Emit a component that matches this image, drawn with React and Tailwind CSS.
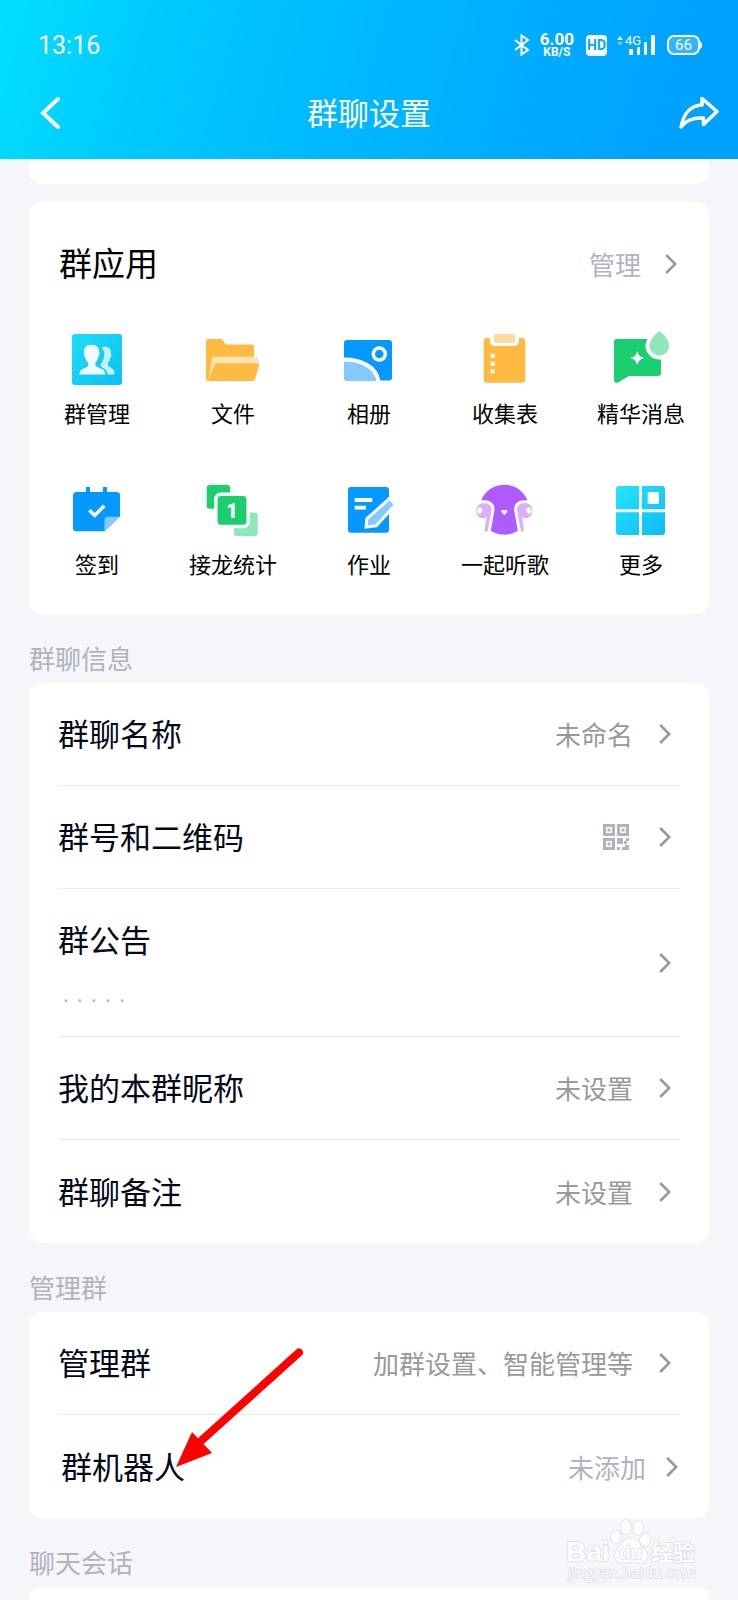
const Chevron = () => (
  <svg className="shrink-0 text-[#999999]" width="12" height="20" viewBox="0 0 12 20" fill="none" stroke="currentColor" strokeWidth="2.6">
    <path d="M1.2 1 L10.2 10 L1.2 19" />
  </svg>
);

const QrIcon = () => (
  <svg className="mr-1" width="26" height="26" viewBox="0 0 26 26" fill="#b0b3bf">
    <path fillRule="evenodd" d="M0 0h12v12H0z M3 3v6h6V3z M14 0h12v12H14z M17 3v6h6V3z M0 14h12v12H0z M3 17v6h6v-6z" />
    <path d="M4.5 4.5h3v3h-3z M18.5 4.5h3v3h-3z M4.5 18.5h3v3h-3z M14 14h6v6h-6z M14 23h3v3h-3z M23 14h3v3h-2v3h-3v-3h2z M19 23h3v-2h4v5h-7z" />
  </svg>
);

const icons = {
  manage: (
    <>
      <defs>
        <linearGradient id="manageBg" x1="0" y1="0" x2="1" y2="1">
          <stop offset="0" stopColor="#1fdcf6" />
          <stop offset="1" stopColor="#0cc0f2" />
        </linearGradient>
      </defs>
      <rect x="5" y="5" width="50" height="51" rx="3" fill="url(#manageBg)" />
      <path
        fill="#c4f2fc"
        d="M34.5 18.8c1.3-.9 2.6-1.2 4-1 4 .3 5.7 3 5.6 6.6l.4 1.5-1 2.5c-.4 2.3-1.4 3.7-2.5 5.2-.3 1-.2 2.6.4 3.4 1.6 1.6 5.3 1.9 5.9 6.3v2.2h-6.8c-.4-6.6-5-5.7-6.7-8.6-.6-1.1-.1-2.1.7-3 1.6-1.8 2.2-3.9 2.4-6.2.9-2.9.5-6.4-2.4-8.9z"
      />
      <path
        fill="#eefbff"
        d="M24.5 15.8c5.8 0 8 3.5 7.7 8.2.8 1.3 0 3.3-1 4.2-.5 2.6-1.5 4-2.7 5.6-.2 1-.1 2.5.2 3.3 3 2.7 9.2 2 9.7 8.3H12.3c.6-6.3 6.6-5.7 8.6-8.3.4-.8.4-2.3.2-3.3-1.3-1.6-2.5-3-3-5.6-1-.9-1.8-2.9-.9-4.2-.4-4.7 1.4-8.2 7.3-8.2z"
      />
    </>
  ),
  file: (
    <>
      <path d="M5 10h12.5q1.3 0 2 1l3.3 4.5H49q2 0 2 2V40L8 52H5q-2 0-2-2V12q0-2 2-2z" fill="#ffba42" />
      <path d="M10.5 27.7H55V36L12 50l-7 1.5 4.3-22.5q.2-1.3 1.2-1.3z" fill="#ffe3b5" />
      <path d="M14 34.3H55.5q1.2 0 .9 1.3L52 50.6q-.5 1.4-2 1.4H6q-1.5 0-1-1.3L12 35.5q.6-1.2 2-1.2z" fill="#ffba42" />
    </>
  ),
  album: (
    <>
      <rect x="5" y="11" width="48" height="40.5" rx="3" fill="#0598ff" />
      <path d="M5 30.5C24 30.5 37.5 39 40 51.5H8q-3 0-3-3z" fill="#85c9ff" />
      <path d="M4.5 30.5C23 30.5 37 38 39.5 52" fill="none" stroke="#fff" strokeWidth="4" />
      <circle cx="40.3" cy="25" r="6" fill="none" stroke="#fff" strokeWidth="3.5" />
    </>
  ),
  form: (
    <>
      <rect x="8.7" y="9" width="41.6" height="44.7" rx="3" fill="#ffba42" />
      <path d="M15 8H44V12q0 5-5 5H20q-5 0-5-5z" fill="#fff" />
      <rect x="18.7" y="5" width="21.5" height="9" rx="2" fill="#ffdaa1" />
      <path d="M15.7 24.7h4v4h-4z M15.7 32.8h4v4h-4z M15.7 40.2h4v4h-4z" fill="#fff" />
    </>
  ),
  essence: (
    <>
      <path d="M6 10H47q3 0 3 3V44q0 3-3 3H18L7 53.5q-3.5 1.5-4-2V13q0-3 3-3z" fill="#1bcf71" />
      <path
        d="M48.3 2Q39 10 38.5 16.5a10 10 0 0 0 20 0Q58 10 48.3 2z"
        fill="#fff"
        stroke="#fff"
        strokeWidth="8"
      />
      <path d="M48.3 2Q38.5 10 38.3 16.5a10 10 0 0 0 20 0Q58 10 48.3 2z" fill="#8de7b8" />
      <path d="M26.3 22Q27.5 28 33.5 29Q27.5 30 26.3 36Q25 30 19 29Q25 28 26.3 22z" fill="#fff" />
    </>
  ),
  sign: (
    <>
      <path d="M19 7h4v7h-4z M36 7h4v7h-4z" fill="#0598ff" />
      <path d="M9.5 12H49.5q3.5 0 3.5 3.5V36.5L37.5 51.3H9.5Q6 51.3 6 48V15.5Q6 12 9.5 12z" fill="#0598ff" />
      <path d="M53 36.7L37.5 51.3V40.2q0-3.5 3.5-3.5z" fill="#85c9ff" />
      <path d="M22.3 30.2l5.5 5.2 9.5-9.7" fill="none" stroke="#fff" strokeWidth="3.5" />
    </>
  ),
  chain: (
    <>
      <rect x="31" y="32.5" width="23.7" height="23.5" rx="3" fill="#8de7b8" />
      <rect x="3.7" y="5" width="23.5" height="23.7" rx="3" fill="#1bcf71" />
      <rect x="12.8" y="14.2" width="32.4" height="32.4" rx="5" fill="#1bcf71" stroke="#fff" strokeWidth="3.5" />
      <text x="29" y="37.5" textAnchor="middle" fontFamily="Roboto, sans-serif" fontWeight="900" fontSize="20" fill="#fff">
        1
      </text>
    </>
  ),
  homework: (
    <>
      <rect x="9" y="7" width="41" height="45.8" rx="3" fill="#0598ff" />
      <path d="M15.7 18h17.6v4H15.7z M15.7 25.8H27v3.7H15.7z" fill="#fff" />
      <path
        d="M50.5 20.5L54.5 24.5L36.5 44.5L28.8 45.3L29.3 39.5z"
        fill="#85c9ff"
        stroke="#fff"
        strokeWidth="6"
        paintOrder="stroke"
      />
    </>
  ),
  music: (
    <>
      <circle cx="29.3" cy="29.7" r="25" fill="#ae5cff" />
      {["", "matrix(-1 0 0 1 58.6 0)"].map((t) => (
        <g key={t} transform={t || undefined}>
          <path d="M0 24H8V38L11 52V58H0z" fill="#fff" />
          <path
            d="M7.5 23.3C13 22.5 17.5 25 16.2 31.5L12.8 50.5Q12.6 51.5 11.6 51.5H9.5L11.5 36.5Q9.500 38.6 6.5 38.3C-1 36-.5 24.5 7.5 23.3z"
            fill="#d9aefb"
            stroke="#fff"
            strokeWidth="6"
            paintOrder="stroke"
          />
          <ellipse cx="4.6" cy="30.5" rx="2.5" ry="3.3" fill="#fff" transform="rotate(12 4.6 30.5)" />
        </g>
      ))}
      <path d="M29.3 35.2l-2.8-2.9q-.9-2.2 1.2-2.5 1.1 0 1.6 1 .5-1 1.6-1 2.1.3 1.2 2.5z" fill="#fff" />
    </>
  ),
  more: (
    <>
      <defs>
        <linearGradient id="moreBg" gradientUnits="userSpaceOnUse" x1="8" y1="6" x2="54" y2="55">
          <stop offset="0" stopColor="#24e4fb" />
          <stop offset="1" stopColor="#0cbcf3" />
        </linearGradient>
      </defs>
      <path
        fill="url(#moreBg)"
        fillRule="evenodd"
        d="M8 6H28V29.3H5V9q0-3 3-3z M31 6H51q3 0 3 3V29.3H31z M36.7 12V24H48V12z M5 32.3H28V55H8q-3 0-3-3z M31 32.3H54V52q0 3-3 3H31z"
      />
    </>
  ),
};

const apps = [
  { icon: "manage", label: "群管理" },
  { icon: "file", label: "文件" },
  { icon: "album", label: "相册" },
  { icon: "form", label: "收集表" },
  { icon: "essence", label: "精华消息" },
  { icon: "sign", label: "签到" },
  { icon: "chain", label: "接龙统计" },
  { icon: "homework", label: "作业" },
  { icon: "music", label: "一起听歌" },
  { icon: "more", label: "更多" },
];

const infoRows = [
  { label: "群聊名称", value: "未命名" },
  { label: "群号和二维码", value: <QrIcon /> },
  { label: "群公告", note: "· · · · ·" },
  { label: "我的本群昵称", value: "未设置" },
  { label: "群聊备注", value: "未设置" },
];

const manageRows = [
  { label: "管理群", value: "加群设置、智能管理等" },
  { label: "群机器人", value: "未添加", light: true },
];

function Row({ label, value, note, light }) {
  return (
    <li className={`mx-[29px] border-b border-[#ebebed] last:border-b-0 ${note ? "h-[148px]" : "h-[103px]"}`}>
      <button
        type="button"
        className={`flex h-full w-full items-center justify-between text-left ${light ? "pl-[3px] pr-0.5" : "pr-[9px]"}`}
      >
        <span className={`flex flex-col ${note ? "pt-2" : "pb-0.5"}`}>
          <span className="text-[31px] leading-10 text-[#03081a]">{label}</span>
          {note && (
            <span className="mt-6 pl-1 font-['Liberation_Sans',sans-serif] text-[23px] leading-8 text-[#b3b3b3]">{note}</span>
          )}
        </span>
        <span className={`flex items-center text-[26px] leading-8 ${light ? "gap-5 text-[#b0b3bf]" : "gap-[26px] text-[#999999]"}`}>
          {value}
          <Chevron />
        </span>
      </button>
    </li>
  );
}

const SectionTitle = ({ children }) => (
  <h2 className="flex h-[69px] items-end pb-[9px] text-[26px] leading-8 text-[#b0b3bf]">{children}</h2>
);

function StatusBar() {
  return (
    <div className="flex h-[46px] items-center justify-between pl-[38px] pr-9 font-['Roboto',sans-serif]">
      <span className="pt-0.5 text-[25px] leading-8">13:16</span>
      <div className="flex items-center">
        <svg width="16" height="22" viewBox="0 0 16 22" fill="none" stroke="#fff" strokeWidth="2">
          <path d="M1 6l13 10-6.5 4.5V1.5L14 6 1 16" />
        </svg>
        <div className="ml-[10px] flex flex-col items-center font-bold">
          <span className="text-[17px] leading-[14px]">6.00</span>
          <span className="text-xs leading-3">KB/S</span>
        </div>
        <span className="ml-3 flex h-[21px] w-[21px] items-center justify-center rounded-sm bg-white text-sm font-bold text-[#06a6ff]">HD</span>
        <svg className="ml-[10px]" width="40" height="22" viewBox="0 0 40 22" fill="#fff">
          <path d="M0 6l3-4 3 4z" />
          <path d="M0 8l3 4 3-4z" opacity=".4" />
          <text x="8" y="11" fontSize="13" fontFamily="Roboto, sans-serif">4G</text>
          <rect x="12" y="15" width="4" height="6" rx="1" />
          <rect x="20" y="13" width="3" height="8" rx="1" />
          <rect x="27" y="8" width="3" height="13" rx="1" />
          <rect x="34" y="1" width="4" height="20" rx="1" />
        </svg>
        <svg className="ml-[10px]" width="35" height="20" viewBox="0 0 35 20">
          <rect x="1" y="1" width="31" height="18" rx="6" fill="#fff" fillOpacity=".2" stroke="#fff" strokeWidth="2" />
          <path d="M33 6q2 1 2 4t-2 4z" fill="#fff" />
          <text x="16.5" y="15" textAnchor="middle" fontSize="15" fontFamily="Roboto, sans-serif" fill="#fff">66</text>
        </svg>
      </div>
    </div>
  );
}

function Watermark() {
  return (
    <svg className="absolute right-[37px] bottom-[15px]" width="136" height="66" viewBox="0 0 136 66" fill="#fbfcfe" stroke="#dcdfe5" strokeWidth="1.5" paintOrder="stroke">
      <ellipse cx="51" cy="18" rx="5" ry="6.5" />
      <ellipse cx="61" cy="8" rx="5" ry="7" />
      <ellipse cx="73" cy="9" rx="5" ry="7" />
      <ellipse cx="80" cy="21" rx="5" ry="6.5" />
      <path d="M66 19c7 0 9 8 14 12 5 6 2 13-5 13-4 0-6-1-9-1s-5 1-9 1c-7 0-9-7-5-13 5-5 7-12 14-12z" />
      <g fontWeight="700">
        <text x="1" y="42" fontSize="28" fontFamily="'Liberation Sans', sans-serif">Bai</text>
        <text x="54" y="40" fontSize="19" fontFamily="'Liberation Sans', sans-serif">du</text>
        <text x="86" y="41" fontSize="22" fontFamily="'Noto Sans CJK SC', sans-serif">经验</text>
      </g>
      <text x="3" y="59" fontSize="15" fontFamily="'Open Sans', sans-serif">jingyan.baidu.com</text>
    </svg>
  );
}

export default function App() {
  return (
    <div className="relative flex min-h-screen flex-col bg-[#f4f6fa] font-['Noto_Sans_CJK_SC',sans-serif] text-black">
      <header className="bg-[linear-gradient(105deg,#00deff_0%,#00c6ff_25%,#00b4ff_55%,#00a2ff_90%)] pt-[22px] pb-px text-white">
        <StatusBar />
        <div className="grid h-[90px] grid-cols-[1fr_auto_1fr] items-center px-[18px]">
          <button type="button" aria-label="返回" className="justify-self-start pl-[22px]">
            <svg width="20" height="32" viewBox="0 0 20 32" fill="none" stroke="#fff" strokeWidth="4" strokeLinecap="round">
              <path d="M18 2L3 16l15 14" />
            </svg>
          </button>
          <h1 className="pb-0.5 text-[31px] leading-10">群聊设置</h1>
          <button type="button" aria-label="分享" className="justify-self-end">
            <svg width="44" height="40" viewBox="0 0 44 40" fill="none" stroke="#fff" strokeWidth="3.5" strokeLinejoin="round">
              <path d="M5 34C8 20 14 12.5 26 12V5.5L41 18.5 27.5 31.5V25C18 24.5 10 27 5 34z" />
            </svg>
          </button>
        </div>
      </header>

      <main className="flex flex-1 flex-col px-[29px]">
        <div className="mb-[18px] h-[25px] rounded-b-[14px] bg-white" />

        <section className="rounded-[14px] bg-white">
          <div className="flex h-[124px] items-center justify-between pr-8 pl-[30px]">
            <h2 className="pb-1 text-[33px] leading-10">群应用</h2>
            <button type="button" className="flex items-center gap-6 text-[26px] leading-8 text-[#b0b3bf]">
              管理
              <Chevron />
            </button>
          </div>
          <div className="grid grid-cols-5 gap-y-[54px] pt-[3px] pb-[37px]">
            {apps.map((app) => (
              <button key={app.icon} type="button" className="flex flex-col items-center">
                <svg width="60" height="60" viewBox="0 0 60 60">
                  {icons[app.icon]}
                </svg>
                <span className="mt-[9px] text-[22px] leading-7">{app.label}</span>
              </button>
            ))}
          </div>
        </section>

        <SectionTitle>群聊信息</SectionTitle>
        <ul className="rounded-[14px] bg-white">
          {infoRows.map((row) => (
            <Row key={row.label} {...row} />
          ))}
        </ul>

        <SectionTitle>管理群</SectionTitle>
        <div className="relative rounded-[14px] bg-white">
          <ul>
            {manageRows.map((row) => (
              <Row key={row.label} {...row} />
            ))}
          </ul>
          <svg className="pointer-events-none absolute top-9 left-[145px]" width="132" height="122" viewBox="0 0 132 122">
            <path d="M125 4.500L28 92" stroke="#ff0000" strokeWidth="8" strokeLinecap="round" />
            <path d="M2 119L18 84L38 105z" fill="#ff0000" />
          </svg>
        </div>

        <SectionTitle>聊天会话</SectionTitle>
        <div className="min-h-3 flex-1 rounded-t-[14px] bg-white" />
      </main>
      <Watermark />
    </div>
  );
}
